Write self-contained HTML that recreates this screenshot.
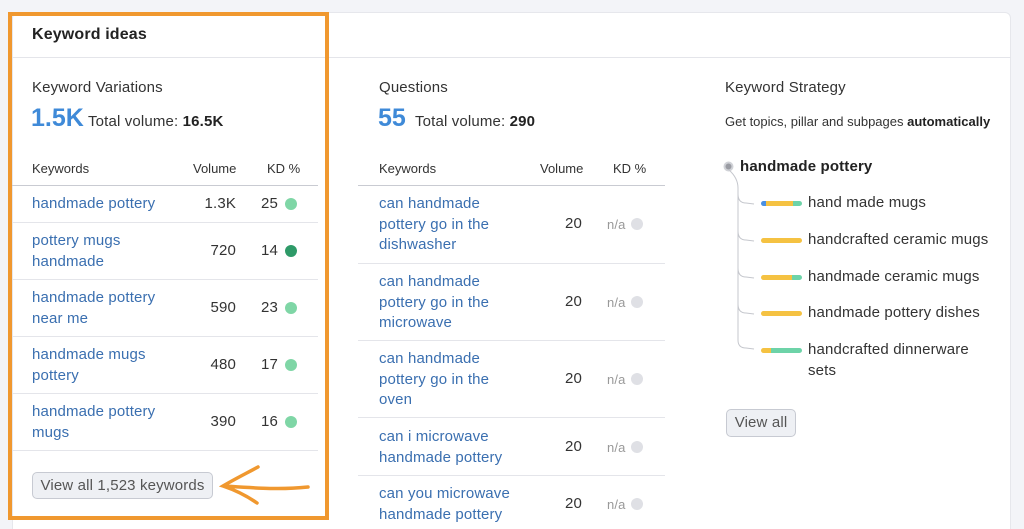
<!DOCTYPE html>
<html><head><meta charset="utf-8"><style>
*{margin:0;padding:0;box-sizing:border-box}
html,body{width:1024px;height:529px;overflow:hidden}
body{background:#f3f4f8;font-family:"Liberation Sans",sans-serif;color:#333;position:relative;font-size:15px;letter-spacing:0.15px}
.card{position:absolute;left:12px;top:12px;width:999px;height:530px;background:#fff;border:1px solid #e6e7ec;border-radius:6px}
.a{position:absolute;white-space:nowrap}
.l{color:#3a6fb0;line-height:20.5px}
.hr{position:absolute;height:1px;background:#e4e5ea}
.hr2{position:absolute;height:1px;background:#c9cbd2}
.v{position:absolute;text-align:right;width:60px}
.d{position:absolute;width:12px;height:12px;border-radius:50%}
.g{background:#7fd6a6}.dg{background:#2e9a68}.gr{background:#dfe0e5}
.na{color:#999;font-size:13px}
.btn{position:absolute;background:#eef0f4;border:1px solid #c7cad2;border-radius:5px;color:#555;font-size:15px;text-align:center}
.bar{position:absolute;height:5px;border-radius:3px;width:41px;left:761px}
.h{font-size:13px;letter-spacing:0}
</style></head><body>
<div class="card"></div>
<div class="a" style="left:32px;top:26px;font-size:16px;font-weight:bold;color:#222">Keyword ideas</div>
<div class="hr" style="left:12px;top:57px;width:999px"></div>

<!-- col1 -->
<div class="a" style="left:32px;top:79px">Keyword Variations</div>
<div class="a" style="left:31px;top:104px;font-size:25px;font-weight:bold;color:#3f8ad8;letter-spacing:0">1.5K</div>
<div class="a" style="left:88px;top:113px">Total volume: <b style="color:#222">16.5K</b></div>
<div class="a h" style="left:32px;top:161px">Keywords</div>
<div class="a h" style="left:193px;top:161px">Volume</div>
<div class="a h" style="left:267px;top:161px">KD %</div>
<div class="hr2" style="left:12px;top:185px;width:306px"></div>
<div class="a l" style="left:32px;top:194px">handmade pottery</div>
<div class="v" style="left:176px;top:195px">1.3K</div><div class="v" style="left:218px;top:195px">25</div><div class="d g" style="left:285px;top:198px"></div>
<div class="hr" style="left:12px;top:222px;width:306px"></div>
<div class="a l" style="left:32px;top:231px">pottery mugs<br>handmade</div>
<div class="v" style="left:176px;top:242px">720</div><div class="v" style="left:218px;top:242px">14</div><div class="d dg" style="left:285px;top:245px"></div>
<div class="hr" style="left:12px;top:279px;width:306px"></div>
<div class="a l" style="left:32px;top:288px">handmade pottery<br>near me</div>
<div class="v" style="left:176px;top:299px">590</div><div class="v" style="left:218px;top:299px">23</div><div class="d g" style="left:285px;top:302px"></div>
<div class="hr" style="left:12px;top:336px;width:306px"></div>
<div class="a l" style="left:32px;top:345px">handmade mugs<br>pottery</div>
<div class="v" style="left:176px;top:356px">480</div><div class="v" style="left:218px;top:356px">17</div><div class="d g" style="left:285px;top:359px"></div>
<div class="hr" style="left:12px;top:393px;width:306px"></div>
<div class="a l" style="left:32px;top:402px">handmade pottery<br>mugs</div>
<div class="v" style="left:176px;top:413px">390</div><div class="v" style="left:218px;top:413px">16</div><div class="d g" style="left:285px;top:416px"></div>
<div class="hr" style="left:12px;top:450px;width:306px"></div>
<div class="btn" style="left:32px;top:472px;width:181px;height:27px;line-height:25px">View all 1,523 keywords</div>

<!-- orange highlight -->
<div style="position:absolute;left:8px;top:12px;width:321px;height:508px;border:4px solid #f0982f"></div>
<svg style="position:absolute;left:215px;top:460px" width="100" height="55"><path d="M43 7 C30 14 18 20 8 26 C20 30 32 36 42 43 M9 26 C40 28 65 30 93 27" fill="none" stroke="#f0982f" stroke-width="3.5" stroke-linecap="round"/></svg>

<!-- col2 -->
<div class="a" style="left:379px;top:79px">Questions</div>
<div class="a" style="left:378px;top:104px;font-size:25px;font-weight:bold;color:#3f8ad8;letter-spacing:0">55</div>
<div class="a" style="left:415px;top:113px">Total volume: <b style="color:#222">290</b></div>
<div class="a h" style="left:379px;top:161px">Keywords</div>
<div class="a h" style="left:540px;top:161px">Volume</div>
<div class="a h" style="left:613px;top:161px">KD %</div>
<div class="hr2" style="left:358px;top:185px;width:307px"></div>
<div class="a l" style="left:379px;top:194px">can handmade<br>pottery go in the<br>dishwasher</div>
<div class="v" style="left:522px;top:215px">20</div><div class="a na" style="left:607px;top:217px">n/a</div><div class="d gr" style="left:631px;top:218px"></div>
<div class="hr" style="left:358px;top:263px;width:307px"></div>
<div class="a l" style="left:379px;top:272px">can handmade<br>pottery go in the<br>microwave</div>
<div class="v" style="left:522px;top:293px">20</div><div class="a na" style="left:607px;top:295px">n/a</div><div class="d gr" style="left:631px;top:296px"></div>
<div class="hr" style="left:358px;top:340px;width:307px"></div>
<div class="a l" style="left:379px;top:349px">can handmade<br>pottery go in the<br>oven</div>
<div class="v" style="left:522px;top:370px">20</div><div class="a na" style="left:607px;top:372px">n/a</div><div class="d gr" style="left:631px;top:373px"></div>
<div class="hr" style="left:358px;top:417px;width:307px"></div>
<div class="a l" style="left:379px;top:427px">can i microwave<br>handmade pottery</div>
<div class="v" style="left:522px;top:438px">20</div><div class="a na" style="left:607px;top:440px">n/a</div><div class="d gr" style="left:631px;top:441px"></div>
<div class="hr" style="left:358px;top:475px;width:307px"></div>
<div class="a l" style="left:379px;top:484px">can you microwave<br>handmade pottery</div>
<div class="v" style="left:522px;top:495px">20</div><div class="a na" style="left:607px;top:497px">n/a</div><div class="d gr" style="left:631px;top:498px"></div>

<!-- col3 -->
<div class="a" style="left:725px;top:79px">Keyword Strategy</div>
<div class="a" style="left:725px;top:114px;font-size:13px;letter-spacing:0">Get topics, pillar and subpages <b style="color:#222">automatically</b></div>
<svg style="position:absolute;left:720px;top:158px" width="50" height="200" fill="none" stroke="#c5c7cd" stroke-width="1">
<circle cx="8.5" cy="8.5" r="4" fill="#9a9ca3" stroke="#d0d2d7" stroke-width="2"/>
<path d="M9 12 Q18 20 18 30 L18 182 Q18 190 26 190 L34 191"/>
<path d="M18 36 Q18 45 26 45 L34 46"/>
<path d="M18 73 Q18 82 26 82 L34 83"/>
<path d="M18 110 Q18 119 26 119 L34 120"/>
<path d="M18 146 Q18 155 26 155 L34 156"/>
</svg>
<div class="a" style="left:740px;top:158px;font-weight:bold;color:#222">handmade pottery</div>
<div class="bar" style="top:201px;background:linear-gradient(90deg,#4a90e2 0 5px,#f5c242 5px 32px,#6dd3a8 32px)"></div>
<div class="a" style="left:808px;top:194px">hand made mugs</div>
<div class="bar" style="top:238px;background:#f5c242"></div>
<div class="a" style="left:808px;top:231px">handcrafted ceramic mugs</div>
<div class="bar" style="top:275px;background:linear-gradient(90deg,#f5c242 0 31px,#6dd3a8 31px)"></div>
<div class="a" style="left:808px;top:268px">handmade ceramic mugs</div>
<div class="bar" style="top:311px;background:#f5c242"></div>
<div class="a" style="left:808px;top:304px">handmade pottery dishes</div>
<div class="bar" style="top:348px;background:linear-gradient(90deg,#f5c242 0 10px,#6dd3a8 10px)"></div>
<div class="a l" style="left:808px;top:340px;color:#333">handcrafted dinnerware<br>sets</div>
<div class="btn" style="left:726px;top:409px;width:70px;height:28px;line-height:26px">View all</div>
</body></html>
